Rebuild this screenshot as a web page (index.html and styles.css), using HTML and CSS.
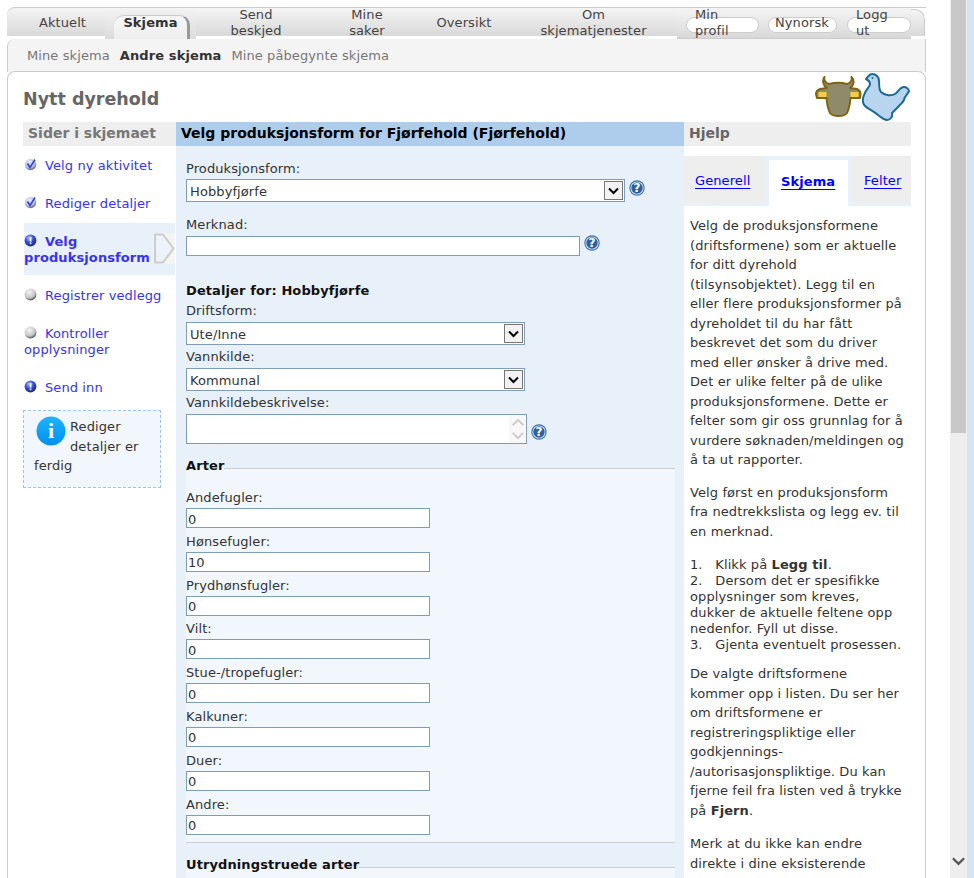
FILE: index.html
```html
<!DOCTYPE html>
<html lang="no">
<head>
<meta charset="utf-8">
<title>Nytt dyrehold</title>
<link rel="stylesheet" href="styles.css">
</head>
<body>
<svg class="defs" width="0" height="0" aria-hidden="true">
  <defs>
    <radialGradient id="gBlue" cx="40%" cy="30%" r="70%"><stop offset="0" stop-color="#b4c0f4"/><stop offset=".55" stop-color="#2f48e0"/><stop offset="1" stop-color="#2a3060"/></radialGradient>
    <radialGradient id="gGrey" cx="40%" cy="30%" r="70%"><stop offset="0" stop-color="#f4f4f4"/><stop offset=".7" stop-color="#c4c4c4"/><stop offset="1" stop-color="#555"/></radialGradient>
    <radialGradient id="gCheck" cx="40%" cy="30%" r="70%"><stop offset="0" stop-color="#e8ecfc"/><stop offset=".7" stop-color="#b4bce8"/><stop offset="1" stop-color="#667"/></radialGradient>
    <linearGradient id="gInfo" x1="0" y1="0" x2="0" y2="1"><stop offset="0" stop-color="#1fb4fa"/><stop offset="1" stop-color="#0090f0"/></linearGradient>
    <symbol id="iCheck" viewBox="0 0 13 13"><circle cx="6.5" cy="6.5" r="5.7" fill="url(#gCheck)"/><path d="M3.5 5.5 L6 9.5 L11 1.5" fill="none" stroke="#3346c8" stroke-width="1.6"/></symbol>
    <symbol id="iBlue" viewBox="0 0 13 13"><circle cx="6.5" cy="6.5" r="5.9" fill="url(#gBlue)"/><rect x="5.8" y="3" width="1.6" height="4.6" fill="#fff"/><rect x="5.8" y="8.5" width="1.6" height="1.6" fill="#fff"/></symbol>
    <symbol id="iGrey" viewBox="0 0 13 13"><circle cx="6.5" cy="6.5" r="5.9" fill="url(#gGrey)"/></symbol>
    <symbol id="iDown" viewBox="0 0 19 19"><rect x=".5" y=".5" width="18" height="18" fill="#f2f2f2" stroke="#777"/><path d="M5 7.5 L9.5 12 L14 7.5" fill="none" stroke="#000" stroke-width="2"/></symbol>
    <symbol id="iChev" viewBox="0 0 16 10"><path d="M2 2 L8 8 L14 2" fill="none" stroke="currentColor" stroke-width="2.4"/></symbol>
    <symbol id="iHelp" viewBox="0 0 16 16"><circle cx="8" cy="8" r="7.7" fill="#3a6ea5"/><circle cx="8" cy="8" r="6.6" fill="#dce8f5"/><circle cx="8" cy="8" r="5.7" fill="#2f5f9f"/></symbol>
  </defs>
</svg>
<div class="page">
  <div class="shell">
    <nav class="topbar">
      <div class="tabs">
        <a class="tab t1">Aktuelt</a>
        <a class="tab t2 current">Skjema</a>
        <a class="tab t3">Send<br>beskjed</a>
        <a class="tab t4">Mine<br>saker</a>
        <a class="tab t5">Oversikt</a>
        <a class="tab t6">Om<br>skjematjenester</a>
      </div>
      <div class="pills">
        <a class="pill p1"><span>Min<br>profil</span></a>
        <a class="pill p2"><span>Nynorsk</span></a>
        <a class="pill p3"><span>Logg<br>ut</span></a>
      </div>
      <div class="bar-end"></div>
    </nav>
    <div class="subnav">
      <a>Mine skjema</a>
      <a class="on">Andre skjema</a>
      <a>Mine påbegynte skjema</a>
    </div>
    <main class="content">
      <header class="head">
        <h1>Nytt dyrehold</h1>
        <div class="animals">
          <svg class="cow" width="47" height="42" viewBox="0 0 47 42">
            <path d="M9.5 1 C8.5 4 10.5 7 14 8 C19 6.5 27 6.5 32 8 C35.5 7 37.5 4 36.5 1 C39.5 4 39.5 9 35 12 L42 13 C44 14 45.5 16 45.5 18 L45 22 L35.5 22 C35 28 34 33 32 37 C29 41 18 41 15 37 C13 33 12 28 11.5 22 L2 22 L1 18 C1 16 3 14 5 13 L12 12 C8 10 7 4 9.5 1 Z" fill="#8f8a6a" stroke="#7f6416" stroke-width="2" stroke-linejoin="round"/>
            <rect x="3.5" y="16" width="8" height="5" fill="#f7cb45"/>
            <rect x="35.5" y="16" width="8" height="5" fill="#f7cb45"/>
          </svg>
          <svg class="hen" width="49" height="49" viewBox="0 0 49 49">
            <path d="M10 1 C14 1 17 4 17 8 C17 13 17 17 19 19 C23 23 30 23 33 21 C36 19 38 14 42 14 C44 14 47 16 47 18 C45 22 42 24 42 27 C40 31 37 32 36 34 C34 36 32 38 30 40 C31 44 28 47 25 47 C21 47 19 44 16 42 C12 38 6 36 3 33 C0 30 0 27 2 22 C4 16 8 14 8 11 C8 9 6 7 4 6 C6 4 7 1 10 1 Z" fill="#b9d4ee" stroke="#1a6a94" stroke-width="2" stroke-linejoin="round"/>
            <circle cx="10.5" cy="5" r="1" fill="#1a6a94"/>
          </svg>
        </div>
      </header>
      <div class="columns">
        <aside class="side">
          <h2 class="side-h">Sider i skjemaet</h2>
          <ul class="steps">
            <li class="step"><svg class="st"><use href="#iCheck"/></svg><a>Velg ny aktivitet</a></li>
            <li class="step"><svg class="st"><use href="#iCheck"/></svg><a>Rediger detaljer</a></li>
            <li class="step active"><svg class="st"><use href="#iBlue"/></svg><a>Velg<br>produksjonsform</a>
              <svg class="pointer" width="22" height="31" viewBox="0 0 22 31"><path d="M2 1.5 H10 L20.5 15.5 L10 29.5 H2 Z" fill="#eef3fa" stroke="#ccc" stroke-width="2" stroke-linejoin="round"/></svg>
            </li>
            <li class="step"><svg class="st"><use href="#iGrey"/></svg><a>Registrer vedlegg</a></li>
            <li class="step"><svg class="st"><use href="#iGrey"/></svg><a>Kontroller<br>opplysninger</a></li>
            <li class="step"><svg class="st"><use href="#iBlue"/></svg><a>Send inn</a></li>
          </ul>
          <div class="notice">
            <svg class="info" width="30" height="30" viewBox="0 0 30 30"><circle cx="15" cy="15" r="14.5" fill="url(#gInfo)"/><text x="15" y="22" text-anchor="middle" class="info-i">i</text></svg>
            Rediger detaljer er ferdig
          </div>
        </aside>
        <section class="form">
          <h2 class="form-h">Velg produksjonsform for Fjørfehold (Fjørfehold)</h2>
          <div class="form-body">
            <label class="lbl first">Produksjonsform:</label>
            <div class="ctl">
              <div class="sel w439"><select><option>Hobbyfjørfe</option></select><svg class="down"><use href="#iDown"/></svg></div>
              <svg class="help h-sel"><use href="#iHelp"/><text x="8" y="12" text-anchor="middle" class="help-q">?</text></svg>
            </div>
            <label class="lbl mer">Merknad:</label>
            <div class="ctl">
              <input class="inp w394" type="text">
              <svg class="help h-inp"><use href="#iHelp"/><text x="8" y="12" text-anchor="middle" class="help-q">?</text></svg>
            </div>
            <h3 class="det">Detaljer for: Hobbyfjørfe</h3>
            <label class="lbl">Driftsform:</label>
            <div class="ctl"><div class="sel w339"><select><option>Ute/Inne</option></select><svg class="down"><use href="#iDown"/></svg></div></div>
            <label class="lbl next">Vannkilde:</label>
            <div class="ctl"><div class="sel w339"><select><option>Kommunal</option></select><svg class="down"><use href="#iDown"/></svg></div></div>
            <label class="lbl next">Vannkildebeskrivelse:</label>
            <div class="ctl">
              <div class="area"><textarea></textarea><div class="area-sb"><svg class="chev up"><use href="#iChev"/></svg><svg class="chev"><use href="#iChev"/></svg></div></div>
              <svg class="help h-area"><use href="#iHelp"/><text x="8" y="12" text-anchor="middle" class="help-q">?</text></svg>
            </div>
            <fieldset class="fs arter">
              <legend>Arter</legend>
              <div class="row"><label>Andefugler:</label><input class="inp w244" type="text" value="0"></div>
              <div class="row"><label>Hønsefugler:</label><input class="inp w244" type="text" value="10"></div>
              <div class="row"><label>Prydhønsfugler:</label><input class="inp w244" type="text" value="0"></div>
              <div class="row"><label>Vilt:</label><input class="inp w244" type="text" value="0"></div>
              <div class="row"><label>Stue-/tropefugler:</label><input class="inp w244" type="text" value="0"></div>
              <div class="row"><label>Kalkuner:</label><input class="inp w244" type="text" value="0"></div>
              <div class="row"><label>Duer:</label><input class="inp w244" type="text" value="0"></div>
              <div class="row"><label>Andre:</label><input class="inp w244" type="text" value="0"></div>
            </fieldset>
            <fieldset class="fs utr">
              <legend>Utrydningstruede arter</legend>
            </fieldset>
          </div>
        </section>
        <aside class="helpcol">
          <h2 class="help-h">Hjelp</h2>
          <div class="help-tabs">
            <a class="ht ht1">Generell</a>
            <a class="ht ht2 on">Skjema</a>
            <a class="ht ht3">Felter</a>
          </div>
          <div class="help-text">
            <p>Velg de produksjonsformene<br>(driftsformene) som er aktuelle<br>for ditt dyrehold<br>(tilsynsobjektet). Legg til en<br>eller flere produksjonsformer på<br>dyreholdet til du har fått<br>beskrevet det som du driver<br>med eller ønsker å drive med.<br>Det er ulike felter på de ulike<br>produksjonsformene. Dette er<br>felter som gir oss grunnlag for å<br>vurdere søknaden/meldingen og<br>å ta ut rapporter.</p>
            <p>Velg først en produksjonsform<br>fra nedtrekkslista og legg ev. til<br>en merknad.</p>
            <div class="steps-text">1. &nbsp; Klikk på <b>Legg til</b>.<br>2. &nbsp; Dersom det er spesifikke<br>opplysninger som kreves,<br>dukker de aktuelle feltene opp<br>nedenfor. Fyll ut disse.<br>3. &nbsp; Gjenta eventuelt prosessen.</div>
            <p class="after-steps">De valgte driftsformene<br>kommer opp i listen. Du ser her<br>om driftsformene er<br>registreringspliktige eller<br>godkjennings-<br>/autorisasjonspliktige. Du kan<br>fjerne feil fra listen ved å trykke<br>på <b>Fjern</b>.</p>
            <p>Merk at du ikke kan endre<br>direkte i dine eksisterende</p>
          </div>
        </aside>
      </div>
    </main>
  </div>
</div>
<div class="scrollbar">
  <div class="thumb"></div>
  <svg class="sb-down"><use href="#iChev"/></svg>
</div>
<div class="strip"></div>
</body>
</html>
```

FILE: styles.css
```css
* { box-sizing: border-box; }
html, body { margin: 0; height: 878px; overflow: hidden; }
body {
  display: flex;
  background: #fff;
  font-family: "DejaVu Sans", Verdana, sans-serif;
  font-size: 13px;
  line-height: 16px;
  letter-spacing: .1px;
  color: #333;
}
a { color: inherit; text-decoration: none; }
h1, h2, h3, p, ul { margin: 0; padding: 0; }
.defs { position: absolute; }

.page { width: 950px; height: 878px; overflow: hidden; padding: 7px 0 0 7px; flex: none; }
.shell { width: 919px; }

/* top tabs */
.topbar {
  display: flex;
  height: 32px;
  background: linear-gradient(#f4f4f4, #d9d9d9) no-repeat 0 0 / 904px 28px;
  border-top: 1px solid #ccc;
  border-top-left-radius: 8px;
  color: #444;
}
.tabs { display: flex; padding-left: 13px; margin-top: -1px; }
.tab { display: flex; align-items: center; justify-content: center; text-align: center; height: 32px; }
.t1 { width: 85px; }
.t2 { width: 91px; }
.t3 { width: 120px; }
.t4 { width: 102px; }
.t5 { width: 92px; }
.t6 { width: 167px; }
.current {
  font-weight: bold;
  color: #333;
  position: relative;
  z-index: 1;
  background: linear-gradient(#f0f0f0, #d9d9d9) no-repeat 0 4px;
}
.current::before {
  content: "";
  position: absolute;
  left: 9px;
  right: 6px;
  top: 8px;
  bottom: 0;
  background: linear-gradient(#f6f6f6, #eee);
  border-radius: 10px 10px 0 0;
  border-top: 1px solid #ccc;
  border-right: 3px solid #999;
  z-index: -1;
}
.pills {
  display: flex;
  gap: 9px;
  width: 234px;
  height: 28px;
  margin-top: 3px;
  padding: 6px 0 0 9px;
  background: linear-gradient(#f2f2f2, #d8d8d8);
  border-bottom: 1px solid #ccc;
  flex: none;
}
.pill {
  display: flex;
  align-items: center;
  height: 16px;
  padding-left: 8px;
  background: #fff;
  border: 1px solid #ccc;
  border-radius: 8px;
  color: #444;
  flex: none;
}
.pill span { margin-top: -4px; }
.p1 { width: 73px; }
.p2 { width: 69px; padding-left: 6px; margin-right: 1px; }
.p3 { width: 64px; }
.bar-end {
  width: 14px;
  height: 27px;
  margin-top: 1px;
  background: linear-gradient(#f4f4f4, #d9d9d9);
  border-top: 1px solid #ccc;
  border-right: 1px solid #ccc;
  border-top-right-radius: 10px;
}

/* sub navigation */
.subnav {
  display: flex;
  gap: 10px;
  height: 33px;
  padding: 9px 0 0 19px;
  background: #f4f4f4;
  color: #777;
  border-left: 1px solid #ccc;
  border-right: 1px solid #ccc;
  border-top-left-radius: 8px;
}
.subnav .on { font-weight: bold; color: #333; }

/* main */
.content {
  margin-top: -1px;
  height: 830px;
  padding: 0 14px 0 15px;
  background: #fff;
  border: 1px solid #ccc;
  border-bottom: 0;
  border-radius: 8px 8px 0 0;
}
.head { display: flex; justify-content: space-between; align-items: flex-end; height: 50px; }
.head h1 { font-size: 17.5px; line-height: 24px; letter-spacing: 0; color: #666; align-self: flex-start; margin-top: 15px; }
.animals { display: flex; align-items: flex-end; gap: 0; }
.cow { margin-bottom: 4px; }
.columns { display: flex; }

/* left */
.side { width: 153px; flex: none; }
.side-h { font-size: 14px; letter-spacing: 0; line-height: 22px; height: 24px; padding-left: 5px; background: #eee; color: #777; }
.steps { list-style: none; }
.step { padding: 12px 0 10px 1px; color: #3a33ee; }
.st { width: 13px; height: 13px; margin-right: 8px; vertical-align: -1px; }
.active {
  position: relative;
  margin: 1px 1px 1px 1px;
  padding: 11px 0 9px;
  background: #e8f0fa;
  font-weight: bold;
}
.pointer { position: absolute; left: 129px; top: 10px; background: #f4f4f4; }
.notice {
  width: 138px;
  height: 78px;
  margin-top: 4px;
  padding: 6px 14px 0 10px;
  background: #f2f7fe;
  border: 1px dashed #9ec4e8;
  line-height: 19.5px;
}
.info { float: left; margin: -1px 4px 0 2px; }
.info-i { font: bold 22px "Liberation Serif", serif; fill: #fff; }

/* middle */
.form { width: 508px; flex: none; background: #e8f0fa; }
.form-h { font-size: 14px; letter-spacing: 0; line-height: 22px; height: 24px; padding-left: 5px; background: #aecdec; color: #000; }
.form-body { padding: 15px 9px 0 10px; }
label { display: block; }
.lbl { margin-bottom: 3px; }
.first { margin-bottom: 2px; }
.mer { margin-top: 15px; }
.next { margin-top: 4px; }
.ctl { display: flex; align-items: flex-start; gap: 4px; }
.sel {
  display: flex;
  align-items: center;
  height: 23px;
  background: #fff;
  border: 1px solid #7f9db9;
  padding-right: 1px;
}
.w439 { width: 439px; }
.w339 { width: 339px; }
.sel select {
  flex: 1;
  min-width: 0;
  height: 21px;
  padding: 2px 0 0 3px;
  appearance: none;
  background: transparent;
  border: 0;
  outline: 0;
  font: inherit;
  letter-spacing: inherit;
  color: #333;
}
.down { width: 19px; height: 19px; flex: none; }
.inp {
  display: block;
  height: 20px;
  padding: 2px 1px 0;
  background: #fff;
  border: 1px solid #7f9db9;
  border-radius: 0;
  outline: 0;
  font: inherit;
  letter-spacing: inherit;
  color: #333;
}
.w394 { width: 394px; }
.w244 { width: 244px; }
.help { width: 16px; height: 16px; flex: none; }
.h-sel { margin-top: 1px; }
.h-inp { margin-top: -1px; }
.h-area { margin-top: 10px; }
.help-q { font: bold 12px "DejaVu Sans", sans-serif; fill: #fff; }
.det { font-size: 13px; line-height: 16px; color: #111; margin: 27px 0 4px; }
.area { display: flex; width: 341px; height: 30px; background: #fff; border: 1px solid #7f9db9; }
.area textarea { flex: 1; min-width: 0; border: 0; outline: 0; resize: none; overflow: hidden; padding: 0; background: #fff; }
.area-sb { display: flex; flex-direction: column; justify-content: center; gap: 4px; align-items: center; width: 17px; background: #f8f8f8; color: #ccc; }
.chev { display: block; width: 14px; height: 9px; }
.chev.up { transform: rotate(180deg); }

/* fieldsets */
.fs {
  margin: 0;
  padding: 0;
  min-width: 0;
  background: #f2f7fe;
  border: 0;
  border-top: 1px solid #ccc;
}
.fs legend { padding: 0 0 4px; font-weight: bold; color: #111; line-height: 16px; }
.arter { margin-top: 14px; padding-top: 12px; height: 385px; border-bottom: 1px solid #ccc; }
.row { height: 43.8px; }
.row label { margin-bottom: 2px; }
.utr { margin-top: 14px; height: 40px; }

/* right */
.helpcol { width: 227px; flex: none; }
.help-h { font-size: 14px; letter-spacing: 0; line-height: 22px; height: 24px; padding-left: 5px; background: #eee; color: #666; }
.help-tabs { display: flex; height: 50px; margin-top: 10px; background: #e8f0fa; }
.ht { display: flex; align-items: center; height: 47px; padding-top: 3px; background: #eee; color: #00f; }
.ht1 { width: 81px; padding-left: 11px; }
.ht2 { width: 79px; height: 46px; margin: 4px 4px 0; padding: 0 0 3px 12px; background: #fff; font-weight: bold; }
.ht3 { width: 59px; padding-left: 12px; }
.ht { text-decoration: underline; text-underline-offset: 3px; }
.help-text { padding: 0 0 0 6px; line-height: 19.5px; color: #333; white-space: nowrap; }
.help-text p { margin: 0 0 13px; }
.help-text p:first-child { margin-top: 10px; }
.help-text .after-steps { margin-bottom: 14px; }
.steps-text { line-height: 16px; margin: 16px 0 11px; }

/* page scrollbar */
.scrollbar { position: relative; width: 17px; height: 878px; background: #eee; flex: none; }
.thumb { width: 15px; height: 433px; margin-left: 1px; background: #c8c8c8; }
.sb-down { position: absolute; left: 1px; top: 856px; width: 15px; height: 10px; color: #555; }
.strip { width: 7px; height: 878px; background: #d6e4f4; flex: none; }
```
